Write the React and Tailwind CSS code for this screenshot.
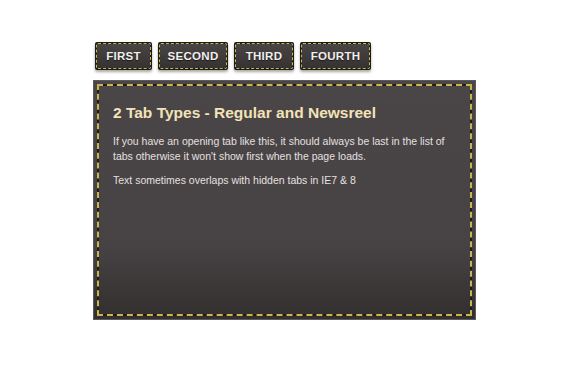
const tabs = [
  { label: 'FIRST', w: 'w-[57px]' },
  { label: 'SECOND', w: 'w-[70px]' },
  { label: 'THIRD', w: 'w-[60px]' },
  { label: 'FOURTH', w: 'w-[71px]' },
];

const Tab = ({ label, w }) => (
  <div className={`${w} h-[28px] rounded-[2px] bg-[#1e1b1b] p-px shadow-[0_2px_3px_rgba(0,0,0,0.35)]`}>
    <div className="h-full w-full rounded-[2px] border-[1.5px] border-dashed border-[#c8b54f] bg-[#1e1b1b]">
      <div className="flex h-full w-full items-center justify-center bg-gradient-to-b from-[#4a4545] to-[#363232] pt-px text-[11.5px] font-bold tracking-[0.3px] text-[#f1eeee] [text-shadow:0_1px_1px_rgba(0,0,0,0.6)]">
        {label}
      </div>
    </div>
  </div>
);

export default function App() {
  return (
    <div className="min-h-[392px] bg-white pl-[93px] pt-[42px]" style={{ fontFamily: '"Liberation Sans", Arial, sans-serif' }}>
      <div className="ml-[2px] flex gap-[6px]">
        {tabs.map((t) => (
          <Tab key={t.label} {...t} />
        ))}
      </div>
      <div className="mt-[10px] h-[240px] w-[383px] border border-[#5d585c] bg-gradient-to-b from-[#4a4546] via-[#464142] via-70% to-[#332f2f] p-[3px]">
        <div className="h-full w-full border-2 border-dashed border-[#c8b54f] bg-[#1e1b1b]">
          <div className="h-full w-full bg-gradient-to-b from-[#4a4546] via-[#474243] via-70% to-[#343030] px-[14px] pt-[17px]">
            <h2 className="text-[15.5px] font-bold leading-[20px] text-[#f3e3b8]">
              2 Tab Types - Regular and Newsreel
            </h2>
            <p className="mt-[11px] text-[10.5px] leading-[15px] text-[#e4e0e0]">
              If you have an opening tab like this, it should always be last in the list of tabs otherwise it won't show first when the page loads.
            </p>
            <p className="mt-[9px] text-[10.5px] leading-[15px] text-[#e4e0e0]">
              Text sometimes overlaps with hidden tabs in IE7 &amp; 8
            </p>
          </div>
        </div>
      </div>
    </div>
  );
}
